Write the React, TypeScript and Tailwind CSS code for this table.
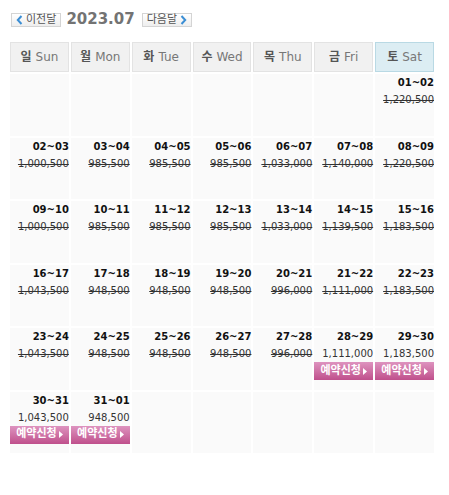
import React from "react";

type Cell = { date: string; price: string; open?: boolean } | null;

const weeks: Cell[][] = [
  [null, null, null, null, null, null, { date: "01~02", price: "1,220,500" }],
  [
    { date: "02~03", price: "1,000,500" },
    { date: "03~04", price: "985,500" },
    { date: "04~05", price: "985,500" },
    { date: "05~06", price: "985,500" },
    { date: "06~07", price: "1,033,000" },
    { date: "07~08", price: "1,140,000" },
    { date: "08~09", price: "1,220,500" },
  ],
  [
    { date: "09~10", price: "1,000,500" },
    { date: "10~11", price: "985,500" },
    { date: "11~12", price: "985,500" },
    { date: "12~13", price: "985,500" },
    { date: "13~14", price: "1,033,000" },
    { date: "14~15", price: "1,139,500" },
    { date: "15~16", price: "1,183,500" },
  ],
  [
    { date: "16~17", price: "1,043,500" },
    { date: "17~18", price: "948,500" },
    { date: "18~19", price: "948,500" },
    { date: "19~20", price: "948,500" },
    { date: "20~21", price: "996,000" },
    { date: "21~22", price: "1,111,000" },
    { date: "22~23", price: "1,183,500" },
  ],
  [
    { date: "23~24", price: "1,043,500" },
    { date: "24~25", price: "948,500" },
    { date: "25~26", price: "948,500" },
    { date: "26~27", price: "948,500" },
    { date: "27~28", price: "996,000" },
    { date: "28~29", price: "1,111,000", open: true },
    { date: "29~30", price: "1,183,500", open: true },
  ],
  [
    { date: "30~31", price: "1,043,500", open: true },
    { date: "31~01", price: "948,500", open: true },
    null,
    null,
    null,
    null,
    null,
  ],
];

const days = [
  ["일", "Sun"],
  ["월", "Mon"],
  ["화", "Tue"],
  ["수", "Wed"],
  ["목", "Thu"],
  ["금", "Fri"],
  ["토", "Sat"],
];

const font = { fontFamily: '"DejaVu Sans", "Noto Sans CJK KR", sans-serif' };

function NavButton({ label, dir }: { label: string; dir: "prev" | "next" }) {
  const arrow = (
    <svg width="7" height="10" viewBox="0 0 7 10" className="shrink-0">
      <path
        d={dir === "prev" ? "M5.5 1 L1.8 5 L5.5 9" : "M1.5 1 L5.2 5 L1.5 9"}
        fill="none"
        stroke="#3b8ed4"
        strokeWidth="2"
      />
    </svg>
  );
  return (
    <button className="flex h-[14px] items-center gap-[3px] border border-[#d4d4d4] bg-gradient-to-b from-white to-[#eeeeee] px-[4px] text-[11px] leading-none text-[#555]">
      {dir === "prev" && arrow}
      <span>{label}</span>
      {dir === "next" && arrow}
    </button>
  );
}

export default function App() {
  return (
    <div className="h-[495px] w-[449px] bg-white" style={font}>
      <div className="flex items-center pl-[11px] pt-[12px]">
        <NavButton label="이전달" dir="prev" />
        <span className="ml-[5px] mr-[7px] text-[15px] font-bold leading-none text-[#737373]">
          2023.07
        </span>
        <NavButton label="다음달" dir="next" />
      </div>

      <div className="ml-[10px] mt-[15px] grid w-[424px] grid-cols-7 gap-[2px]">
        {days.map(([ko, en], i) => (
          <div
            key={en}
            className={`flex h-[30px] items-center justify-center gap-[4px] border text-[12px] ${
              i === 6 ? "border-[#b9d9e4] bg-[#dcedf3]" : "border-[#e3e3e3] bg-[#f1f1f1]"
            }`}
          >
            <span className="font-bold text-[#555]">{ko}</span>
            <span className="text-[#777]">{en}</span>
          </div>
        ))}
      </div>

      <div className="ml-[10px] mt-[2px] grid h-[379px] w-[424px] grid-cols-7 grid-rows-6 gap-[2px]">
        {weeks.flat().map((c, i) => (
          <div key={i} className="flex flex-col items-stretch bg-[#fafafa] pt-[1px]">
            {c && (
              <>
                <div className="text-right text-[10px] font-bold leading-[15px] text-[#111]">
                  {c.date}
                </div>
                <div
                  className={`mt-[2px] text-right text-[10px] leading-[15px] text-[#333] ${
                    c.open ? "" : "line-through"
                  }`}
                >
                  {c.price}
                </div>
                {c.open && (
                  <div className="mt-[1px] flex h-[18px] items-center justify-center gap-[2px] bg-gradient-to-b from-[#dd93bf] to-[#bf4f8c] text-[11px] font-bold text-white">
                    <span>예약신청</span>
                    <svg width="4" height="7" viewBox="0 0 4 7">
                      <path d="M0 0 L4 3.5 L0 7 Z" fill="#fff" />
                    </svg>
                  </div>
                )}
              </>
            )}
          </div>
        ))}
      </div>
    </div>
  );
}
